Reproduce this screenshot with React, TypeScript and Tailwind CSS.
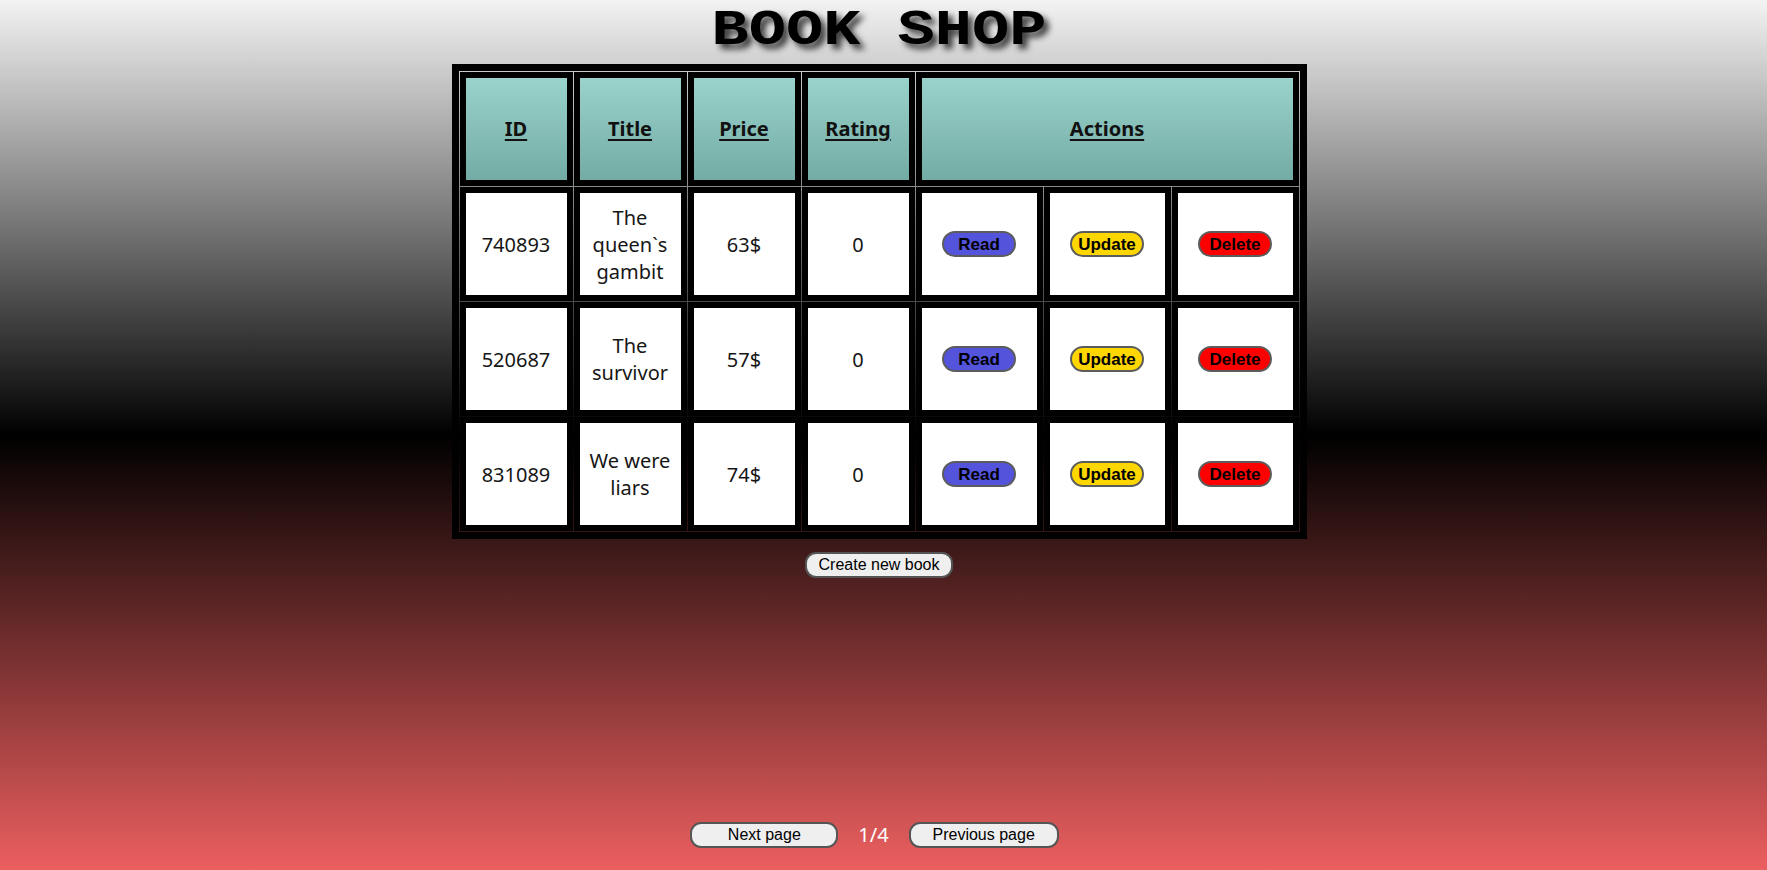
import React from "react";

type Book = {
  id: string
  title: string
  price: string
  rating: string
}

const books: Book[] = [
  { id: "740893", title: "The queen`s gambit", price: "63$", rating: "0" },
  { id: "520687", title: "The survivor", price: "57$", rating: "0" },
  { id: "831089", title: "We were liars", price: "74$", rating: "0" },
];

const cellBase = "flex h-[114px] items-center justify-center border-[6px] border-black text-center";
const headCell = cellBase + " bg-[linear-gradient(#9ad3cb,#73aba5)] text-[20px] font-bold underline underline-offset-[3px] text-[#111]";
const bodyCell = cellBase + " bg-white text-[20px] leading-[27px] text-[#161616] px-1";
const actionBtn = "h-[26px] w-[74px] rounded-full border-2 border-[#5c5c5c] font-['Liberation_Sans',Arial,sans-serif] text-[17px] font-bold leading-none text-black";
const plainBtn = "h-[26px] rounded-[11px] border-2 border-[#555] bg-[#efefef] font-['Liberation_Sans',Arial,sans-serif] text-[16px] leading-none text-black";

export default function App() {
  return (
    <div className="flex min-h-screen flex-col items-center pr-[9px] bg-[linear-gradient(#f3f3f3,#000_50%,#ec5f5f)] font-['Noto_Sans',sans-serif]">
      {/* page title */}
      <div className="h-[64px]">
        <h1 className="inline-block scale-y-[0.8] font-['Liberation_Mono','Courier_New',monospace] text-[62px] font-bold leading-[61px] text-black [text-shadow:5px_6px_7px_rgba(0,0,0,0.75)] whitespace-pre">
          BOOK SHOP
        </h1>
      </div>

      {/* books table */}
      <div className="border-[7px] border-black">
        <div className="grid grid-cols-[113px_113px_113px_113px_127px_127px_127px] gap-px p-px">
          <div className={headCell}>ID</div>
          <div className={headCell}>Title</div>
          <div className={headCell}>Price</div>
          <div className={headCell}>Rating</div>
          <div className={headCell + " col-span-3"}>Actions</div>

          {books.map((b) => (
            <React.Fragment key={b.id}>
              <div className={bodyCell}>{b.id}</div>
              <div className={bodyCell}>{b.title}</div>
              <div className={bodyCell}>{b.price}</div>
              <div className={bodyCell}>{b.rating}</div>
              <div className={bodyCell}>
                <button className={actionBtn + " bg-[#5353dc]"}>Read</button>
              </div>
              <div className={bodyCell}>
                <button className={actionBtn + " bg-[#ffd700]"}>Update</button>
              </div>
              <div className={bodyCell}>
                <button className={actionBtn + " bg-[#ff0000]"}>Delete</button>
              </div>
            </React.Fragment>
          ))}
        </div>
      </div>

      <button className={plainBtn + " mt-[13px] h-[24px] w-[148px]"}>Create new book</button>

      {/* pagination */}
      <div className="mt-auto mb-[22px] mr-[9px] flex items-center gap-[20px]">
        <button className={plainBtn + " w-[148px]"}>Next page</button>
        <span className="text-[20px] leading-none text-white">1/4</span>
        <button className={plainBtn + " w-[150px]"}>Previous page</button>
      </div>
    </div>
  )
}
